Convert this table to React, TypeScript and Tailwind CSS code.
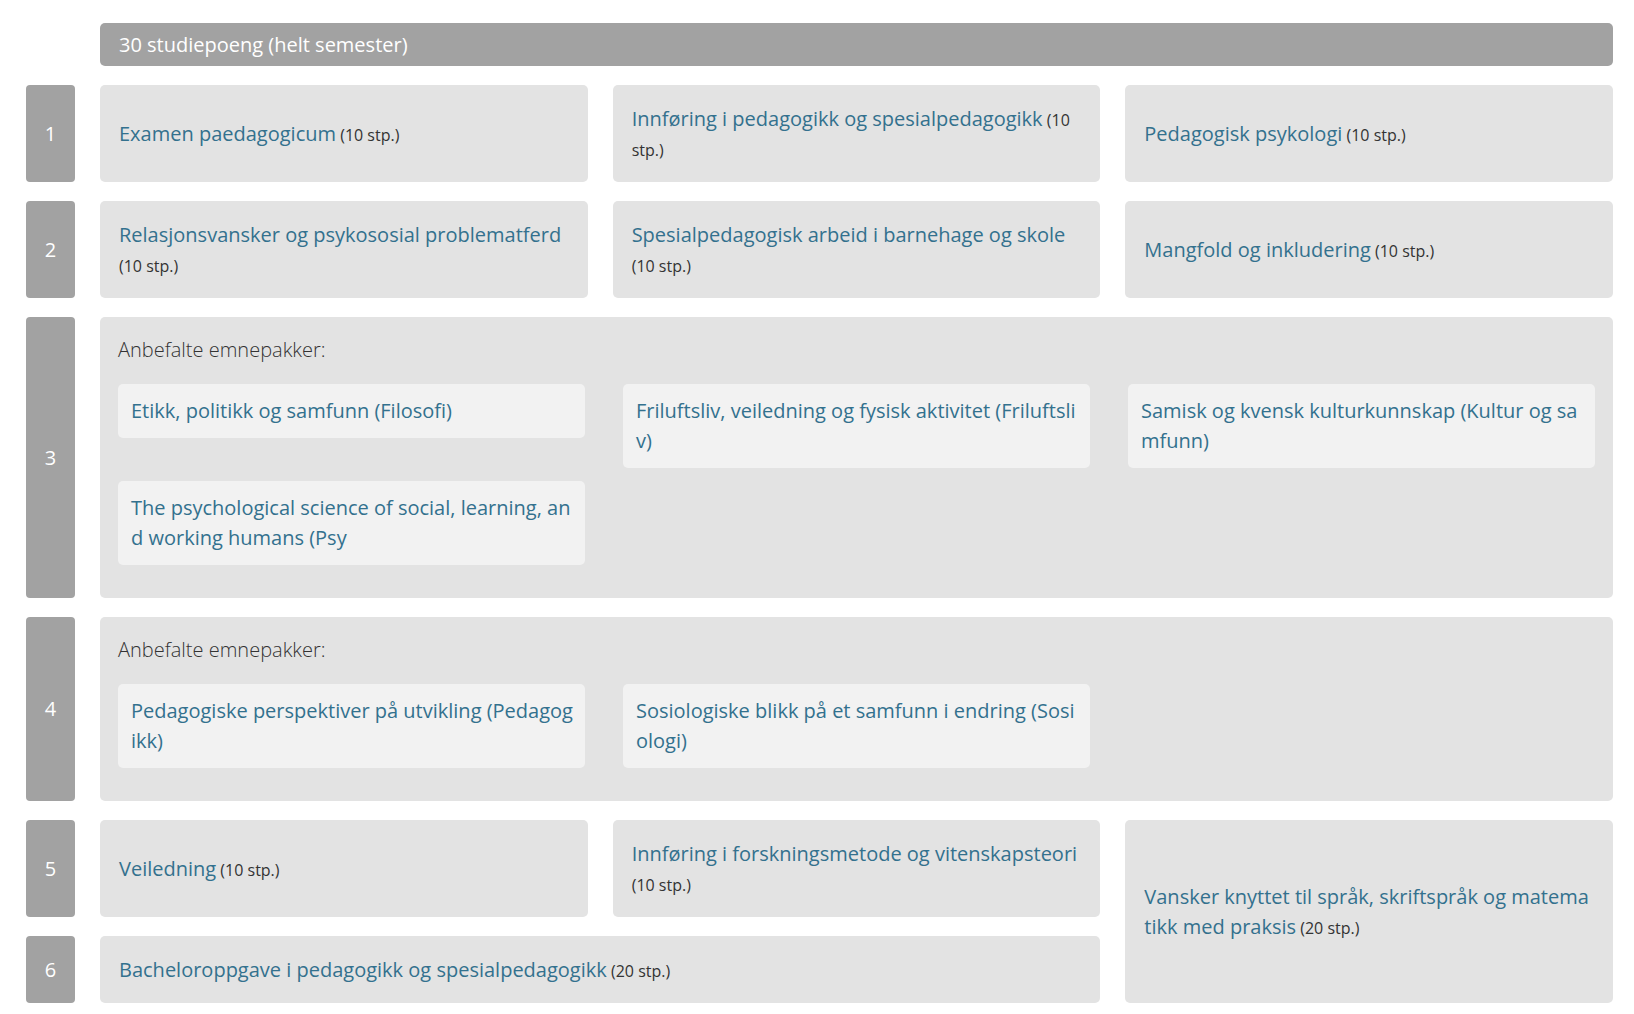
import React from 'react';

const font = { fontFamily: '"Open Sans", "Noto Sans", sans-serif' };

interface CourseProps {
  title: string;
  points?: string;
  className?: string;
  breakAll?: boolean;
}

const Num: React.FC<{ n: number; className?: string }> = ({ n, className = '' }) => (
  <div className={`bg-[#a2a2a2] rounded-[4px] flex items-center justify-center text-white text-[20px] ${className}`}>
    {n}
  </div>
);

const Course: React.FC<CourseProps> = ({ title, points, className = '', breakAll }) => (
  <div className={`bg-[#e3e3e3] rounded-[5px] px-[19px] py-[18.5px] flex items-center ${className}`}>
    <p className={`text-[20px] leading-[30px] ${breakAll ? 'break-all' : ''}`}>
      <a href="#" className="text-[#33718e]">{title}</a>
      {points && <span className="text-[16px] leading-none text-[#333]"> ({points})</span>}
    </p>
  </div>
);

const Pack: React.FC<{ title: string }> = ({ title }) => (
  <div className="bg-[#f2f2f2] rounded-[5px] pl-[13px] pr-[8px] py-[12px] text-[20px] leading-[30px] text-[#33718e] break-all">
    <a href="#">{title}</a>
  </div>
);

const Packages: React.FC<{ items: string[]; className?: string }> = ({ items, className = '' }) => (
  <div className={`bg-[#e3e3e3] rounded-[5px] pt-[18px] px-[18px] pb-[33px] ${className}`}>
    <div className="text-[20px] leading-[30px] font-light text-[#333] mb-[19px]">Anbefalte emnepakker:</div>
    <div className="grid grid-cols-3 gap-x-[38px] gap-y-[13px] items-start">
      {items.map(t => (
        <Pack key={t} title={t} />
      ))}
    </div>
  </div>
);

export default function App() {
  return (
    <div className="bg-white min-h-[1014px] pt-[23px] pl-[26px] pr-[21px]" style={font}>
      <div className="grid grid-cols-[49px_1fr_1fr_1fr] gap-x-[25px] gap-y-[19px]">
        <div />
        <div className="col-span-3 bg-[#a2a2a2] rounded-[5px] h-[43px] flex items-center px-[19px] text-white text-[20px]">
          30 studiepoeng (helt semester)
        </div>

        <Num n={1} />
        <Course title="Examen paedagogicum" points="10 stp." />
        <Course title="Innføring i pedagogikk og spesialpedagogikk" points="10 stp." />
        <Course title="Pedagogisk psykologi" points="10 stp." />

        <Num n={2} />
        <Course title="Relasjonsvansker og psykososial problematferd" points="10 stp." />
        <Course title="Spesialpedagogisk arbeid i barnehage og skole" points="10 stp." />
        <Course title="Mangfold og inkludering" points="10 stp." />

        <Num n={3} />
        <Packages
          className="col-span-3"
          items={[
            'Etikk, politikk og samfunn (Filosofi)',
            'Friluftsliv, veiledning og fysisk aktivitet (Friluftsliv)',
            'Samisk og kvensk kulturkunnskap (Kultur og samfunn)',
            'The psychological science of social, learning, and working humans (Psy',
          ]}
        />

        <Num n={4} />
        <Packages
          className="col-span-3"
          items={[
            'Pedagogiske perspektiver på utvikling (Pedagogikk)',
            'Sosiologiske blikk på et samfunn i endring (Sosiologi)',
          ]}
        />

        <Num n={5} />
        <Course title="Veiledning" points="10 stp." />
        <Course title="Innføring i forskningsmetode og vitenskapsteori" points="10 stp." />
        <Course
          className="row-span-2"
          breakAll
          title="Vansker knyttet til språk, skriftspråk og matematikk med praksis"
          points="20 stp."
        />

        <Num n={6} />
        <Course className="col-span-2" title="Bacheloroppgave i pedagogikk og spesialpedagogikk" points="20 stp." />
      </div>
    </div>
  );
}
